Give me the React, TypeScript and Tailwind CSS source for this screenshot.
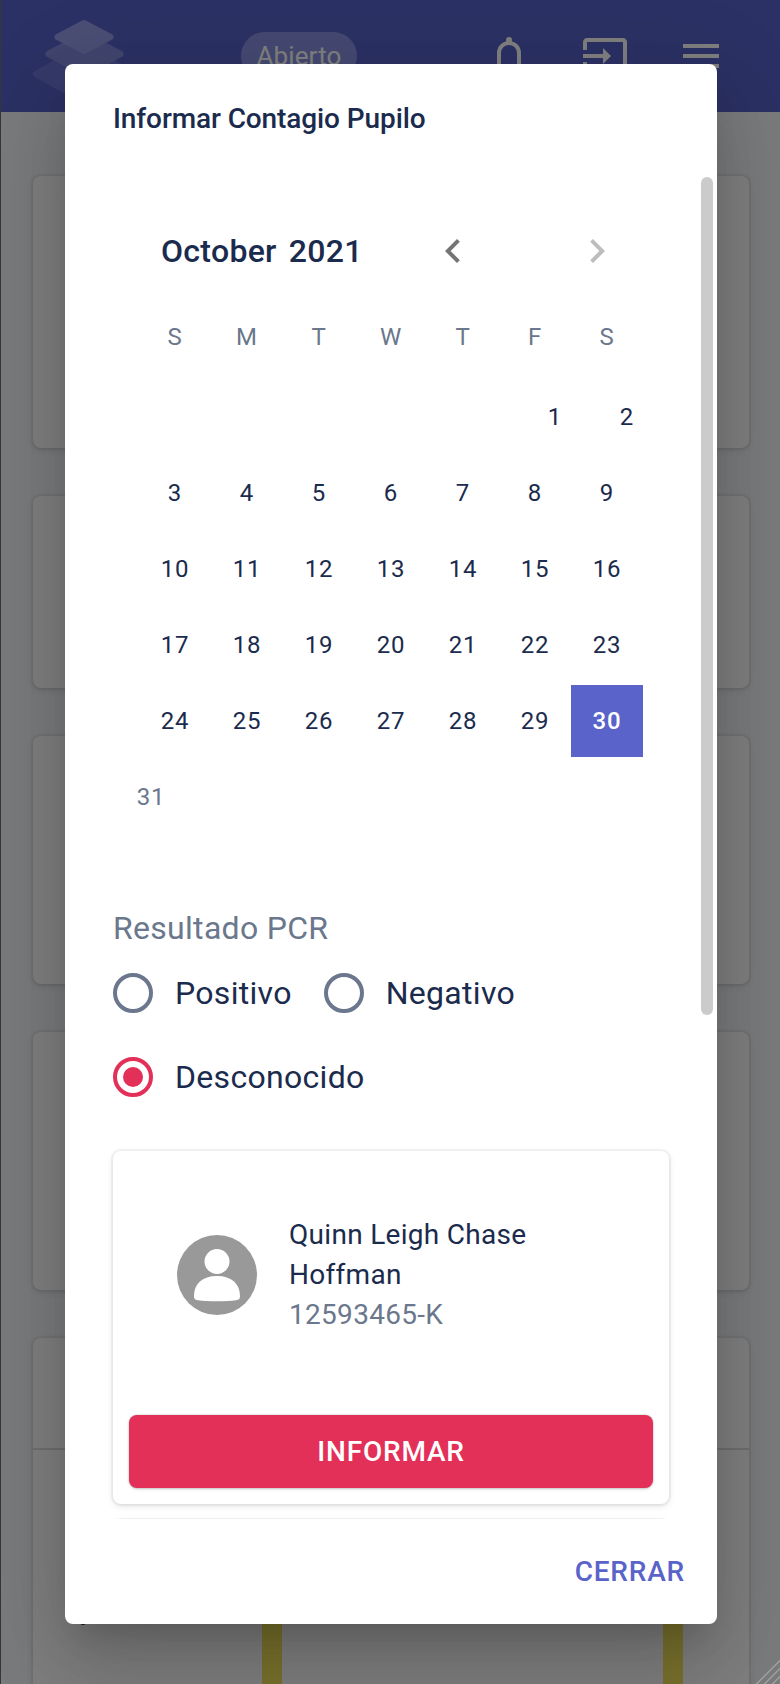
import React from "react";

const cardShadow =
  "shadow-[0_0_0_2px_rgba(63,63,68,0.05),0_2px_6px_rgba(63,63,68,0.15)]";

const weeks: number[][] = [
  [3, 4, 5, 6, 7, 8, 9],
  [10, 11, 12, 13, 14, 15, 16],
  [17, 18, 19, 20, 21, 22, 23],
  [24, 25, 26, 27, 28, 29, 30],
];

function Icon({ d, className }: { d: string; className?: string }) {
  return (
    <svg viewBox="0 0 24 24" className={`size-12 shrink-0 ${className ?? ""}`} fill="currentColor">
      <path d={d} />
    </svg>
  );
}

function Logo() {
  return (
    <svg width="110" height="100" viewBox="0 0 110 100" className="ml-[29px] mt-[10px] shrink-0" strokeLinejoin="round">
      <path d="M54.500 37.500 6.500 64l48 26.500 48-26.500z" strokeWidth="7" fill="#6b75d2" stroke="#6b75d2" />
      <path d="M54.500 25 19 44l35.500 19L90 44z" strokeWidth="7" fill="#828bdc" stroke="#828bdc" />
      <path d="M54 13 27.500 27 54 41l26.500-14z" strokeWidth="6" fill="#949ce8" stroke="#949ce8" />
    </svg>
  );
}

function Header() {
  return (
    <header className="flex h-28 items-start bg-[#5963ca] text-white">
      <Logo />
      <div className="ml-[101px] mt-8 flex h-12 w-[116px] items-center justify-center rounded-full bg-[#8a93e4] text-[26px] tracking-[0.1px]">
        Abierto
      </div>
      <svg viewBox="0 0 48 48" className="ml-32 mt-8 size-12 shrink-0" fill="none" stroke="currentColor" strokeWidth="4">
        <path d="M14 36V21a10 10 0 0 1 20 0v15M8 36h32" />
        <circle cx="24" cy="8" r="3" fill="currentColor" stroke="none" />
      </svg>
      <Icon className="ml-12 mt-8" d="M21 3.01H3c-1.1 0-2 .9-2 2V9h2V4.99h18v14.03H3V15H1v4.01c0 1.1.9 1.98 2 1.98h18c1.1 0 2-.88 2-1.98v-14c0-1.11-.9-2-2-2zM11 16l4-4-4-4v3H1v2h10v3z" />
      <Icon className="ml-12 mt-8" d="M3 18h18v-2H3v2zm0-5h18v-2H3v2zm0-7v2h18V6H3z" />
    </header>
  );
}

function Backdrop() {
  const card = `rounded-lg bg-white ${cardShadow}`;
  return (
    <div className="h-full border-l border-[#6e6e70] bg-[#f4f6f8]">
      <Header />
      <main className="flex flex-col gap-12 pl-8 pr-[31px] pt-16">
        <div className={`h-[272px] ${card}`} />
        <div className={`h-48 ${card}`} />
        <div className={`h-[248px] ${card}`} />
        <div className={`h-[258px] ${card}`} />
        <div className={`h-[400px] ${card}`}>
          <div className="h-28 border-b-2 border-[#dcdcdc]" />
          <div className="flex h-[288px]">
            <div className="ml-[47px] mt-[169px] h-[6px] w-[6px] rounded-full bg-[#172b4d]" />
            <div className="ml-44 w-5 bg-[#f5e55a]" />
            <div className="ml-[381px] w-5 bg-[#f5e55a]" />
          </div>
        </div>
      </main>
    </div>
  );
}

function Calendar() {
  return (
    <section className="flex flex-col">
      <div className="flex h-[66px] items-center pl-12">
        <h3 className="flex w-[268px] gap-[12px] text-[32px] font-medium leading-[42px] tracking-[0.3px]">
          <span>October</span>
          <span>2021</span>
        </h3>
        <Icon className="text-[#757575]" d="M15.41 7.41L14 6l-6 6 6 6 1.41-1.41L10.83 12z" />
        <Icon className="ml-24 text-[#bdbdbd]" d="M10 6L8.59 7.41 13.17 12l-4.58 4.59L10 18l6-6z" />
      </div>
      <div className="ml-[26px] mt-[37px] flex text-2xl leading-8 tracking-[0.8px] text-[#6b778c]">
        {["S", "M", "T", "W", "T", "F", "S"].map((d, i) => (
          <div key={i} className="flex h-8 w-[72px] items-center justify-center">{d}</div>
        ))}
      </div>
      <div className="mt-7 flex flex-col gap-1 text-2xl tracking-[0.8px]">
        <div className="flex pl-[406px]">
          <div className="flex size-[72px] items-center justify-center">1</div>
          <div className="flex size-[72px] items-center justify-center">2</div>
        </div>
        {weeks.map((week) => (
          <div key={week[0]} className="ml-[26px] flex">
            {week.map((day) => (
              <div
                key={day}
                className={`flex size-[72px] items-center justify-center ${day === 30 ? "bg-[#5963ca] font-medium text-white" : ""}`}
              >
                {day}
              </div>
            ))}
          </div>
        ))}
        <div className="ml-[2px] flex size-[72px] items-center justify-center text-[#6b778c]">31</div>
      </div>
    </section>
  );
}

function Radio({ label, checked }: { label: string; checked?: boolean }) {
  return (
    <label className="flex h-[84px] items-center">
      <span className={`flex size-10 items-center justify-center rounded-full border-4 ${checked ? "border-[#e33059]" : "border-[#6b778c]"}`}>
        {checked && <span className="size-5 rounded-full bg-[#e33059]" />}
      </span>
      <span className="ml-[22px] text-[32px] leading-[48px] tracking-[0.3px]">{label}</span>
    </label>
  );
}

function Avatar() {
  return (
    <svg viewBox="0 0 80 80" className="size-20 shrink-0">
      <circle cx="40" cy="40" r="40" fill="#999" />
      <circle cx="40" cy="26.500" r="12.500" fill="#fff" />
      <path d="M17 61c0-12 8-20 23-20s23 8 23 20c0 3-1 3.700-4 4.200C54 66 47 66.300 40 66.300S26 66 21 65.200c-3-.5-4-1.200-4-4.200z" fill="#fff" />
    </svg>
  );
}

function Dialog() {
  return (
    <div className="flex h-[1560px] w-[652px] flex-col rounded-lg bg-white shadow-[0_22px_30px_-14px_rgba(0,0,0,0.16),0_48px_76px_6px_rgba(0,0,0,0.12),0_18px_92px_16px_rgba(0,0,0,0.08)]">
      <h2 className="h-28 px-12 pt-[35px] text-[28px] font-medium leading-10 tracking-[-0.1px]">Informar Contagio Pupilo</h2>
      <div className="flex h-[1343px] overflow-hidden">
        <div className="w-[636px] shrink-0 pl-12 pr-8 pt-[42px]">
          <Calendar />
          <p className="mt-[71px] text-[32px] leading-[48px] tracking-[0.3px] text-[#6b778c]">Resultado PCR</p>
          <div className="-mt-px flex flex-wrap gap-x-8">
            <Radio label="Positivo" />
            <Radio label="Negativo" />
            <div className="w-full"><Radio label="Desconocido" checked /></div>
          </div>
          <div className={`mt-8 flex h-[353px] flex-col rounded-lg p-4 ${cardShadow}`}>
            <div className="flex flex-1 items-center gap-8 px-12 pb-8">
              <Avatar />
              <div className="text-[28px] leading-10 tracking-[0.3px]">
                <p className="w-[260px]">Quinn Leigh Chase Hoffman</p>
                <p className="text-[#6b778c]">12593465-K</p>
              </div>
            </div>
            <button className="h-[73px] rounded-lg bg-[#e33059] text-[28px] font-medium tracking-[0.8px] text-white shadow-[0_0_2px_rgba(0,0,0,0.31),0_2px_4px_-2px_rgba(0,0,0,0.25)]">
              INFORMAR
            </button>
          </div>
          <div className={`mt-4 h-[200px] rounded-lg ${cardShadow}`} />
        </div>
        <div className="mt-px h-[838px] w-3 rounded-full bg-[#cbcbcb]" />
      </div>
      <div className="flex flex-1 items-center justify-end px-8 text-[28px] font-medium tracking-[0.8px] text-[#5963ca]">
        CERRAR
      </div>
    </div>
  );
}

export default function App() {
  return (
    <div className="relative h-[1684px] w-[780px] overflow-hidden font-['Roboto',sans-serif] text-[#1b2b4d]">
      <Backdrop />
      <div className="absolute inset-0 bg-black/50 pl-[65px] pt-16">
        <Dialog />
      </div>
      <svg className="absolute bottom-0 right-0" width="25" height="24" stroke="#a0a0a0" strokeWidth="1.500">
        <path d="M1 24.500 25 .5M9 24.500l16-16M17 24.500l8-8" />
      </svg>
    </div>
  );
}
